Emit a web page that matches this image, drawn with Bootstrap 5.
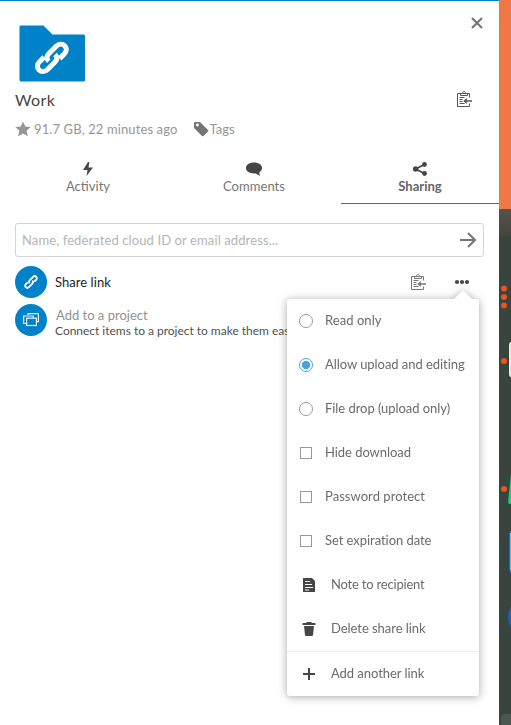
<!DOCTYPE html>
<html lang="en">
<head>
<meta charset="utf-8">
<meta name="viewport" content="width=device-width, initial-scale=1">
<title>Work - Sharing</title>
<link href="https://cdn.jsdelivr.net/npm/bootstrap@5.3.0/dist/css/bootstrap.min.css" rel="stylesheet">
<style>
html, body { height: 725px; overflow: hidden; }
body { font-family: Lato, "Open Sans", sans-serif; font-size: 13px; line-height: 20px; color: #666; background: #fff; }
svg { display: block; flex: none; }
.app-panel { width: 499px; height: 725px; border-top: 1px solid #0082c9; }
.head-row { height: 92px; padding: 9px 15px 0; }
.folder-art { margin: 15px 0 0 4px; }
.close-btn { width: 14px; height: 14px; padding: 0; border: 0; background: none; margin: 6px 0 0; }
.item-name { font-size: 16px; color: #444; letter-spacing: .4px; margin-top: -2px; }
.title-row { height: 15px; padding: 0 27px 0 15px; }
.title-row svg { margin-top: -4px; }
.meta-row { height: 20px; margin-top: 11px; padding-left: 15px; color: #969696; }
.stat-text { margin-left: 3px; letter-spacing: .11px; }
.tab-bar { height: 53px; margin-top: 12px; padding-left: 9px; }
.tab-bar .nav-link { width: 158px; height: 53px; padding: 10px 0 0; color: #767676; border-radius: 0; border-bottom: 1px solid transparent; line-height: 18px; }
.tab-bar .nav-item { flex: 0 0 auto; }
.tab-bar .nav-link.active { color: #666; font-weight: 700; border-bottom-color: #666; }
.share-body { padding: 19px 15px 0; }
.share-field { height: 34px; margin-bottom: 6px; border: 1px solid #d5d5d5; border-radius: 3px; padding: 0 7px 0 6px; }
.share-field input { border: 0; outline: 0; padding: 0 0 1px; color: #666; background: none; min-width: 0; letter-spacing: .11px; }
.share-field input::placeholder { color: #b4b4b4; opacity: 1; }
.entry { height: 38px; }
.entry-name { margin-top: -1px; }
.disc { width: 32px; height: 32px; background: #0082c9; }
.dots { margin: 0 10px 0 24px; }
.proj-name { color: #919191; line-height: 16px; padding-left: 1px; margin-top: 5px; }
.proj-note { color: #505050; font-size: 12px; line-height: 15px; letter-spacing: -.02px; }
.share-menu { position: absolute; left: 287px; top: 299px; width: 192px; height: 397px; border-radius: 3px; background: #fff; filter: drop-shadow(0 1px 4px rgba(77,77,77,.5)); }
.share-menu::before { content: ""; position: absolute; right: 7px; top: -9px; border: 9px solid transparent; border-top: 0; border-bottom-color: #fff; }
.menu-line { height: 44px; padding-left: 12px; color: #6b6b6b; letter-spacing: -.05px; }
.menu-line span { margin-top: -2px; }
.menu-line input { appearance: none; width: 14px; height: 14px; margin: 0 12px 0 0; border: 1px solid #999; border-radius: 50%; flex: none; }
.menu-line input[type=checkbox] { width: 12px; height: 12px; margin: 0 13px 0 1px; border-radius: 0; }
.menu-line input:checked { border-color: #49a5d9; background: radial-gradient(circle, #49a5d9 3.8px, #fff 4.5px); }
.menu-line svg { margin: 0 14px 0 2px; }
.menu-last { border-top: 1px solid #ededed; height: 45px; }
.fit-wide { letter-spacing: .05px; }
.fit-tight { letter-spacing: -.2px; }
</style>
<script src="https://cdn.jsdelivr.net/npm/bootstrap@5.3.0/dist/js/bootstrap.bundle.min.js"></script>
</head>
<body>
<svg width="0" height="0" class="position-absolute">
<defs>
<symbol id="chain" viewBox="0 0 16 16"><g fill="none" stroke="currentColor" stroke-width="1.8"><path d="M6.700 9.400C5.500 8.200 5.900 7.100 6.800 6.200l3.300-3.300c1-1 2.200-1 3.100-.1s.9 2.100-.1 3.100l-1.800 1.800"/><path d="M9.300 6.600c1.200 1.200.8 2.300-.1 3.200l-3.300 3.300c-1 1-2.200 1-3.100.1s-.9-2.100.1-3.100l1.800-1.800"/></g></symbol>
<symbol id="clip" viewBox="0 0 16 16"><path fill="none" stroke="currentColor" d="M13.500 6.500v-4H1.500v13h12v-3M4.500 4.500v-2h2c0-2.700 3-2.700 3 0h2v2h-7M3.500 6.500h5M3.500 8.500h3M3.500 10.500h3M3.500 12.500h5"/><path fill="currentColor" d="M7.300 10l3.500-3v2.200H16v1.500h-5.200V13z"/></symbol>
</defs>
</svg>
<div class="d-flex">
<main class="app-panel flex-shrink-0">
  <div class="head-row d-flex justify-content-between">
    <svg class="folder-art" width="67" height="57" viewBox="0 0 67 57"><path fill="#0082c9" d="M2 .5h22.500l9 9H64.500q1.500 0 1.500 1.500v44q0 1.500-1.500 1.500H2q-1.500 0-1.500-1.500v-53.500Q.5.5 2 .5z"/><g transform="translate(14 13.500) scale(2.420)" fill="none" stroke="#fff" stroke-width="2.100"><path d="M6.500 9.400C5.300 8.200 5.700 7.100 6.600 6.200l3-3c1.100-1.100 2.600-1.100 3.500-.2s.9 2.300-.2 3.400l-1.900 1.900"/><path d="M9.100 6.600c1.200 1.200.8 2.300-.1 3.200l-3 3c-1.100 1.100-2.600 1.100-3.500.2s-.9-2.300.2-3.400l1.900-1.900"/></g></svg>
    <button class="close-btn" aria-label="Close"><svg width="14" height="14" viewBox="0 0 14 14"><path d="M2 2l10 10M12 2L2 12" stroke="#767676" stroke-width="2.200"/></svg></button>
  </div>
  <div class="title-row d-flex align-items-center justify-content-between">
    <span class="item-name">Work</span>
    <svg width="16" height="16" color="#555"><use href="#clip"/></svg>
  </div>
  <div class="meta-row d-flex align-items-center">
    <svg width="16" height="16" viewBox="0 0 16 16"><path fill="#969696" d="M8 .5l2.300 5 5.500.5-4.200 3.700 1.300 5.600L8 12.400l-4.900 2.900 1.300-5.600L.2 6l5.500-.5z"/></svg>
    <span class="stat-text">91.7 GB, 22 minutes ago</span>
    <svg class="ms-3" width="16" height="16" viewBox="0 0 16 16"><path fill="#757575" fill-rule="evenodd" d="M1 2q0-1 1-1h5l8 8q.6.700 0 1.400L10.400 15q-.7.600-1.400 0L1 7zm2 2a1.400 1.400 0 1 0 2.800 0A1.400 1.400 0 1 0 3 4z"/></svg>
    <span class="fit-wide">Tags</span>
  </div>
  <ul class="nav tab-bar flex-nowrap text-center">
    <li class="nav-item"><a class="nav-link d-flex flex-column align-items-center" href="#"><svg width="16" height="16" viewBox="0 0 16 16"><path fill="#464646" d="M8 1L3 9h4.500l-1 6L13 6.500H8.500L9.300 1z"/></svg><span>Activity</span></a></li>
    <li class="nav-item ms-2"><a class="nav-link d-flex flex-column align-items-center" href="#"><svg width="16" height="16" viewBox="0 0 16 16"><path fill="#464646" d="M8 1.500c5 0 8 2.400 8 5.500 0 1.900-1 3.200-2.700 4.200l.5 3.800-4-2.600C4 12.900 0 10.700 0 7c0-3.100 3-5.500 8-5.500z"/></svg><span class="fit-wide">Comments</span></a></li>
    <li class="nav-item ms-2"><a class="nav-link active d-flex flex-column align-items-center" href="#"><svg width="16" height="16" viewBox="0 0 16 16"><path stroke="#464646" stroke-width="1.700" fill="none" d="M12.500 3.500L3.500 8l9 4.500"/><g fill="#464646"><circle cx="3.600" cy="8" r="2.700"/><circle cx="12.500" cy="3.500" r="2.400"/><circle cx="12.500" cy="12.500" r="2.400"/></g></svg><span>Sharing</span></a></li>
  </ul>
  <div class="share-body">
    <div class="share-field d-flex align-items-center">
      <input class="flex-grow-1" type="text" placeholder="Name, federated cloud ID or email address...">
      <svg width="16" height="16" viewBox="0 0 16 16"><path d="M0 8h15M8 1l7 7-7 7" fill="none" stroke="#767676" stroke-width="2"/></svg>
    </div>
    <div class="entry d-flex align-items-center">
      <span class="disc rounded-circle d-flex align-items-center justify-content-center text-white"><svg width="16" height="16"><use href="#chain"/></svg></span>
      <span class="ms-2 text-dark entry-name fit-wide">Share link</span>
      <svg class="ms-auto" width="16" height="16" color="#767676"><use href="#clip"/></svg>
      <svg class="dots" width="24" height="16" viewBox="0 0 24 16"><g fill="#464646"><circle cx="7" cy="8" r="2.100"/><circle cx="12" cy="8" r="2.100"/><circle cx="17" cy="8" r="2.100"/></g></svg>
    </div>
    <div class="entry d-flex align-items-center">
      <span class="disc rounded-circle d-flex align-items-center justify-content-center text-white"><svg width="16" height="16" viewBox="0 0 16 16"><g fill="none" stroke="#e6f3fa" stroke-width="1.200"><path d="M5 3V1.700h10.400v8H13"/><path d="M3 11.500H.7V4h9.500v2"/><rect x="3.600" y="6.200" width="9.800" height="7.300"/></g></svg></span>
      <div class="ms-2 text-nowrap"><div class="proj-name">Add to a project</div><div class="proj-note">Connect items to a project to make them eas</div></div>
    </div>
  </div>
</main>
<svg width="12" height="725" viewBox="0 0 12 725">
  <defs><linearGradient id="dusk" x2="0" y2="1"><stop stop-color="#55534b"/><stop offset="1" stop-color="#45463e"/></linearGradient></defs>
  <path fill="#38453e" d="M0 0h12v725H0z"/><path fill="#f07746" d="M0 0h12v209H0z"/><path fill="url(#dusk)" d="M0 209h12v27H0z"/>
  <g fill="#e95420"><circle cx="5" cy="288.500" r="3"/><circle cx="5" cy="297" r="3"/><circle cx="5" cy="305.500" r="3"/><circle cx="5" cy="361" r="3"/><circle cx="5" cy="489" r="3"/></g>
  <path fill="#e9e9e5" d="M12 342q-2 0-2 4v28q0 3 2 3z"/><path fill="#23c87c" d="M12 474l-3 28q0 2 3 2z"/><path fill="#1267dc" d="M12 531q-2 0-2 3v36q0 3 2 3z"/><path fill="#5bbcff" d="M11 533h1v37h-1z"/><path fill="#285caf" d="M12 606q-6 11 0 22z"/><path fill="#4b5750" d="M2 725v-7q0-4 4-4h6v11z"/>
</svg>
</div>
<div class="share-menu">
  <label class="menu-line d-flex align-items-center"><input type="radio" name="access"><span class="fit-wide">Read only</span></label>
  <label class="menu-line d-flex align-items-center"><input type="radio" name="access" checked><span>Allow upload and editing</span></label>
  <label class="menu-line d-flex align-items-center"><input type="radio" name="access"><span>File drop (upload only)</span></label>
  <label class="menu-line d-flex align-items-center"><input type="checkbox"><span>Hide download</span></label>
  <label class="menu-line d-flex align-items-center"><input type="checkbox"><span class="fit-wide">Password protect</span></label>
  <label class="menu-line d-flex align-items-center"><input type="checkbox"><span>Set expiration date</span></label>
  <div class="menu-line d-flex align-items-center"><svg width="16" height="16" viewBox="0 0 16 16"><path fill="#464646" d="M2 1h9l3 3v11H2z"/><path stroke="#fff" d="M4 4.500h5M4 7.500h7M4 10.500h8M4 13h4"/></svg><span class="fit-tight">Note to recipient</span></div>
  <div class="menu-line d-flex align-items-center"><svg width="16" height="16" viewBox="0 0 16 16"><path fill="#464646" d="M6 1h4l1 1h3q.5 0 .5.500V4h-13V2.500Q1.500 2 2 2h3zM3 5h10l-1 9q-.2 1-1 1H5q-.8 0-1-1z"/></svg><span>Delete share link</span></div>
  <div class="menu-line menu-last d-flex align-items-center"><svg width="16" height="16" viewBox="0 0 16 16"><path stroke="#464646" stroke-width="2" d="M8 2v12M2 8h12"/></svg><span>Add another link</span></div>
</div>
</body>
</html>
